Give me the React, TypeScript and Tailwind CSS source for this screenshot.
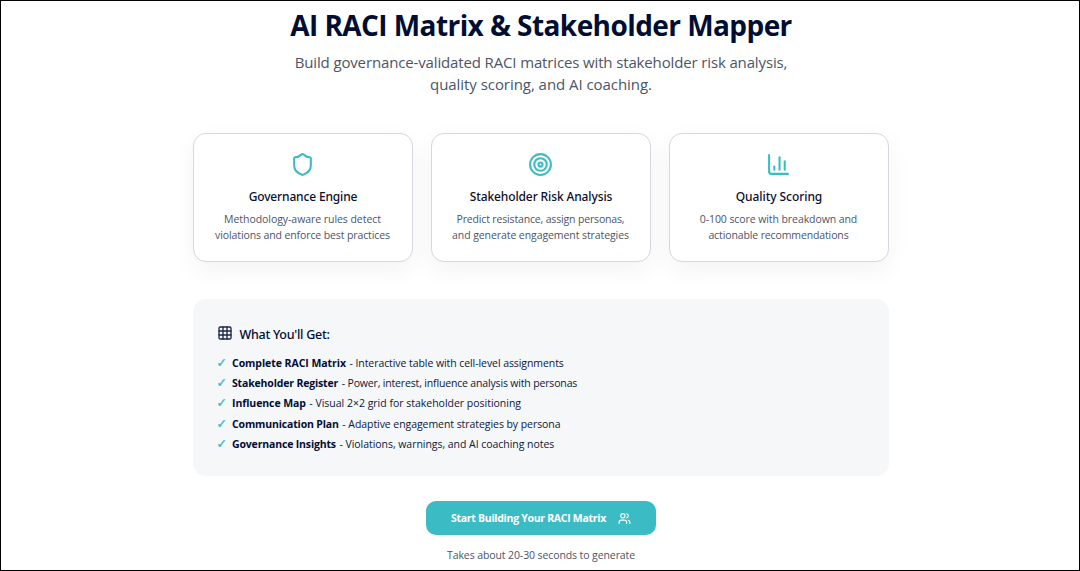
import { ChartColumn, Grid3x3, Shield, Target, Users, type LucideIcon } from "lucide-react";

type Feature = { icon: LucideIcon; title: string; titleClass: string; lines: { text: string; className: string }[] };

const features: Feature[] = [
  {
    icon: Shield,
    title: "Governance Engine",
    titleClass: "tracking-[-0.15px]",
    lines: [
      { text: "Methodology-aware rules detect", className: "tracking-[-0.05px]" },
      { text: "violations and enforce best practices", className: "tracking-[-0.11px]" },
    ],
  },
  {
    icon: Target,
    title: "Stakeholder Risk Analysis",
    titleClass: "tracking-[-0.12px]",
    lines: [
      { text: "Predict resistance, assign personas,", className: "tracking-[-0.16px]" },
      { text: "and generate engagement strategies", className: "tracking-[-0.08px]" },
    ],
  },
  {
    icon: ChartColumn,
    title: "Quality Scoring",
    titleClass: "tracking-[-0.06px]",
    lines: [
      { text: "0-100 score with breakdown and", className: "tracking-[-0.08px]" },
      { text: "actionable recommendations", className: "tracking-[-0.12px]" },
    ],
  },
];

const deliverables = [
  { name: "Complete RACI Matrix", nameClass: "tracking-[-0.05px]", text: "Interactive table with cell-level assignments", textClass: "tracking-[-0.07px]" },
  { name: "Stakeholder Register", nameClass: "tracking-[-0.16px]", text: "Power, interest, influence analysis with personas", textClass: "tracking-[-0.16px]" },
  { name: "Influence Map", nameClass: "tracking-[-0.08px]", text: "Visual 2×2 grid for stakeholder positioning", textClass: "tracking-[-0.01px]" },
  { name: "Communication Plan", nameClass: "tracking-[-0.15px]", text: "Adaptive engagement strategies by persona", textClass: "tracking-[-0.06px]" },
  { name: "Governance Insights", nameClass: "tracking-[-0.16px]", text: "Violations, warnings, and AI coaching notes", textClass: "tracking-[-0.04px]" },
];

function FeatureCard({ icon: Icon, title, titleClass, lines }: Feature) {
  return (
    <div className="flex h-[129px] flex-col items-center rounded-[13px] border border-[#d6d7e1] bg-white pt-[18px] text-center shadow-[0_8px_24px_rgba(0,0,0,0.05)]">
      <Icon size={25} strokeWidth={2} className="text-[#3bbcc4]" />
      <h3 className={`mt-[10px] ml-px font-['Noto_Sans',sans-serif] text-[12px] leading-5 font-medium whitespace-nowrap text-[#0a0f2c] ${titleClass}`}>{title}</h3>
      <p className="mt-[4px] text-[10.5px] leading-4 whitespace-nowrap text-[#4b5568]">
        {lines.map((line) => (
          <span key={line.text} className={`block ${line.className}`}>{line.text}</span>
        ))}
      </p>
    </div>
  );
}

export default function App() {
  return (
    <main className="flex h-[571px] flex-col items-center overflow-hidden border border-black bg-white pl-px font-['Open_Sans','Noto_Sans',sans-serif] text-[#000e33]">
      <h1 className="mt-[6px] ml-px text-[28px] leading-9 font-bold tracking-[-0.57px] whitespace-nowrap">AI RACI Matrix &amp; Stakeholder Mapper</h1>
      <p className="mt-[8px] ml-px text-center text-[15px] leading-[22px] whitespace-nowrap text-[#4b5568]">
        <span className="block tracking-[-0.14px]">Build governance-validated RACI matrices with stakeholder risk analysis,</span>
        <span className="block tracking-[-0.05px]">quality scoring, and AI coaching.</span>
      </p>

      <div className="mt-[38px] grid w-[696px] grid-cols-3 gap-[18px]">
        {features.map((f) => (
          <FeatureCard key={f.title} {...f} />
        ))}
      </div>

      <section className="mt-[37px] h-[177px] w-[696px] shrink-0 rounded-[13px] bg-[#f6f7f9] px-[24px] pt-[25px]">
        <h2 className="flex h-5 items-center gap-[7px] font-['Noto_Sans',sans-serif] text-[12.5px] font-medium tracking-[-0.27px]">
          <Grid3x3 size={16} strokeWidth={2} className="-mt-[2px] text-[#1b2748]" />
          <span className="pt-[2px]">What You&apos;ll Get:</span>
        </h2>
        <ul className="mt-[9px] text-[10.5px] leading-[20.2px] whitespace-nowrap">
          {deliverables.map((d) => (
            <li key={d.name} className="flex h-[20.2px]">
              <span className="w-[15.5px] font-['DejaVu_Sans',sans-serif] text-[12.5px] font-bold text-[#3bbcc4] [-webkit-text-stroke:0.4px_#3bbcc4]">✓</span>
              <strong className={`font-bold ${d.nameClass}`}>{d.name}</strong>
              <span className={`ml-[3.5px] text-[#0d1838] ${d.textClass}`}>- {d.text}</span>
            </li>
          ))}
        </ul>
      </section>

      <button className="mt-[25px] flex h-[34px] w-[230px] shrink-0 items-center justify-center gap-[12px] rounded-[10px] bg-[#3bbcc4] pl-px text-[10.5px] font-bold tracking-[-0.29px] text-white">
        <span className="pt-px">Start Building Your RACI Matrix</span>
        <Users size={13} strokeWidth={2} />
      </button>
      <p className="mt-[12px] ml-px text-[10.5px] leading-4 tracking-[-0.1px] text-[#4b5568]">Takes about 20-30 seconds to generate</p>
    </main>
  );
}
